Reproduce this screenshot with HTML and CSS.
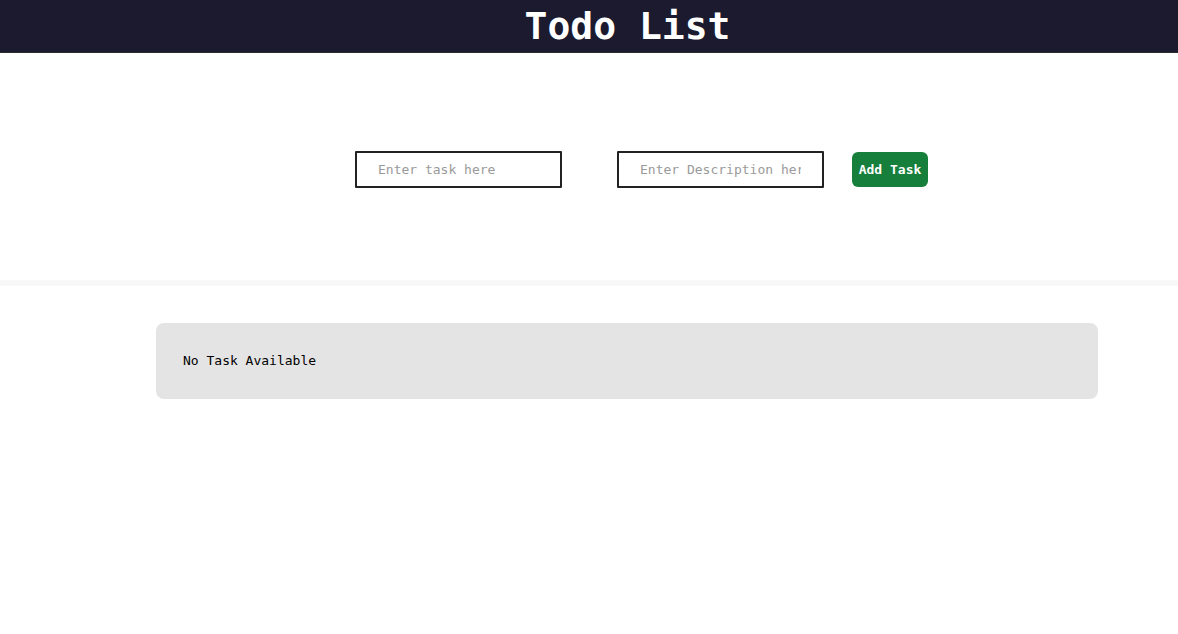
FILE: index.html
```html
<!DOCTYPE html>
<html>
<head>
<meta charset="utf-8">
<link rel="stylesheet" href="styles.css">
</head>
<body>
<header class="topbar"><h1 class="title">Todo List</h1></header>
<section class="form-area">
  <div class="form-row">
    <input class="field field-task" type="text" placeholder="Enter task here">
    <input class="field field-desc" type="text" placeholder="Enter Description here">
    <button class="add-btn">Add Task</button>
  </div>
</section>
<div class="divider"></div>
<main class="list-area">
  <div class="task-card">No Task Available</div>
</main>
</body>
</html>
```
FILE: styles.css
```css
* { box-sizing: border-box; }
body {
  margin: 0;
  font-family: "DejaVu Sans Mono", "Liberation Mono", monospace;
  background: #ffffff;
  color: #000;
}
.topbar {
  height: 53px;
  background: #1b1a2e;
  border-bottom: 1px solid #2a2a30;
  display: flex;
  justify-content: center;
  align-items: center;
}
.title {
  margin: 0 0 0 77px;
  color: #ffffff;
  font-size: 38px;
  font-weight: bold;
  line-height: 52px;
}
.form-area {
  height: 227px;
  display: flex;
  align-items: center;
  padding-left: 355px;
  padding-top: 6px;
}
.form-row {
  display: flex;
  align-items: center;
}
.field {
  width: 207px;
  height: 37px;
  border: 2px solid #222;
  border-radius: 1px;
  padding: 0 21px;
  font-family: inherit;
  font-size: 13px;
  color: #333;
  outline: none;
}
.field::placeholder { color: #9a9a9a; }
.field-task { margin-right: 55px; }
.field-desc { margin-right: 28px; }
.add-btn {
  width: 76px;
  height: 35px;
  border: none;
  border-radius: 6px;
  background: #157f3b;
  color: #fff;
  font-family: inherit;
  font-weight: bold;
  font-size: 13px;
  padding: 0;
}
.divider {
  height: 6px;
  background: #f8f8f8;
}
.list-area {
  padding: 37px 0 0 156px;
}
.task-card {
  width: 942px;
  height: 76px;
  background: #e4e4e4;
  border-radius: 8px;
  display: flex;
  align-items: center;
  padding-left: 27px;
  padding-bottom: 1px;
  font-size: 13px;
  color: #000;
}
```
